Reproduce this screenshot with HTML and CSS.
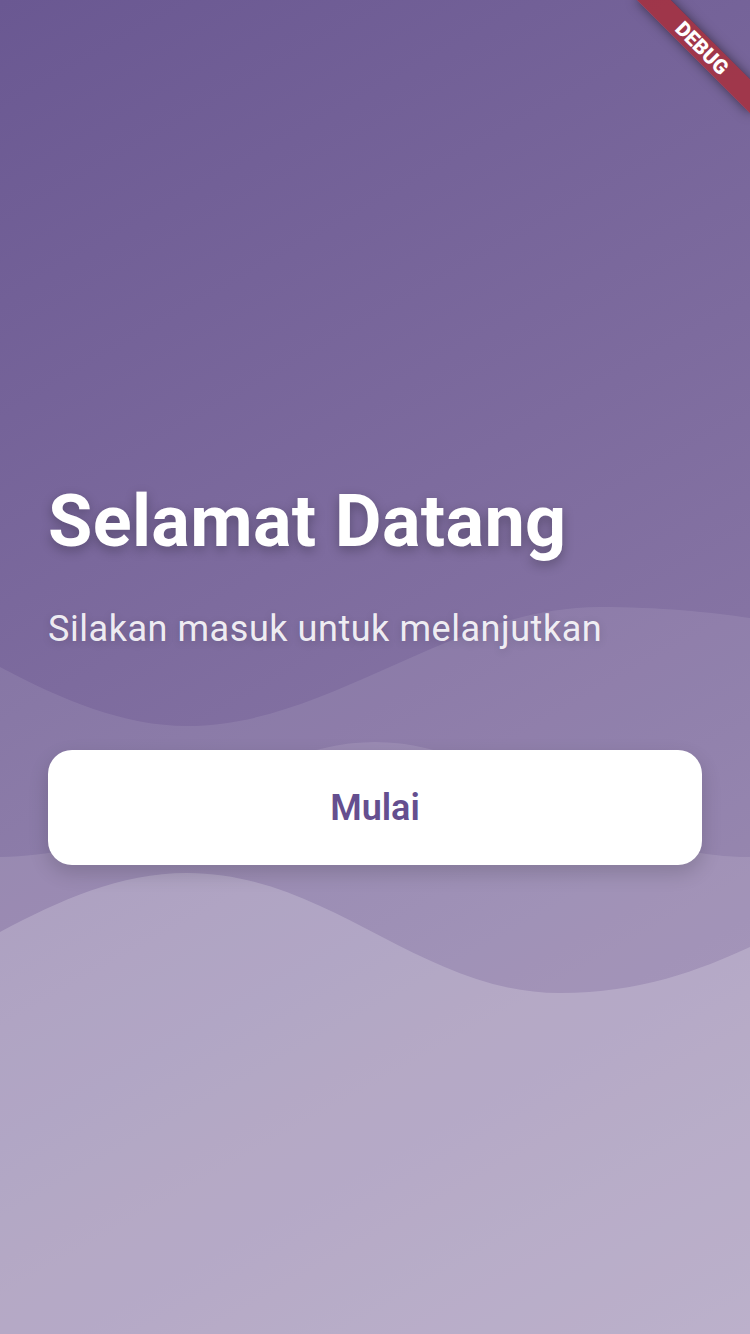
FILE: index.html
```html
<!DOCTYPE html>
<html lang="id">
<head>
<meta charset="utf-8">
<title>Selamat Datang</title>
<link rel="stylesheet" href="styles.css">
</head>
<body>
<div class="screen">
  <svg class="waves" viewBox="0 0 750 1334" preserveAspectRatio="none" aria-hidden="true">
    <path class="wave wave-1" d="M0,667 C62,700 125,726 187,726 C330,726 450,607 600,607 C660,607 710,612 750,618 L750,1334 L0,1334 Z"/>
    <path class="wave wave-2" d="M0,857 C150,857 250,742 375,742 C500,742 600,857 750,857 L750,1334 L0,1334 Z"/>
    <path class="wave wave-3" d="M0,932 C60,900 120,873 187,873 C330,873 420,993 560,993 C640,993 700,970 750,947 L750,1334 L0,1334 Z"/>
  </svg>
  <main class="content">
    <h1 class="title">Selamat Datang</h1>
    <p class="subtitle">Silakan masuk untuk melanjutkan</p>
    <button class="start-btn" type="button">Mulai</button>
  </main>
  <div class="debug-banner"><span>DEBUG</span></div>
</div>
</body>
</html>
```
FILE: styles.css
```css
* { box-sizing: border-box; }
html, body {
  margin: 0;
  padding: 0;
  width: 750px;
  height: 1334px;
  overflow: hidden;
}
body {
  font-family: Roboto, "Noto Sans", "Liberation Sans", sans-serif;
}
.screen {
  position: relative;
  width: 750px;
  height: 1334px;
  overflow: hidden;
  background: linear-gradient(150.7deg, #6a5892 0%, #9886af 100%);
}
.waves {
  position: absolute;
  inset: 0;
  width: 750px;
  height: 1334px;
}
.wave { fill: #ffffff; }
.wave-1 { fill-opacity: 0.09; }
.wave-2 { fill-opacity: 0.115; }
.wave-3 { fill-opacity: 0.205; }

.content {
  position: relative;
  display: flex;
  flex-direction: column;
  padding: 480px 48px 0;
}
.title {
  margin: 0;
  font-size: 72px;
  font-weight: 700;
  line-height: 84px;
  letter-spacing: 0.35px;
  color: #ffffff;
  text-shadow: 0 4px 12px rgba(0, 0, 0, 0.28);
}
.subtitle {
  margin: 44px 0 0;
  font-size: 36px;
  font-weight: 400;
  line-height: 42px;
  letter-spacing: 0.55px;
  color: rgba(255, 255, 255, 0.9);
  text-shadow: 0 2px 8px rgba(0, 0, 0, 0.15);
}
.start-btn {
  margin-top: 100px;
  height: 115px;
  width: 100%;
  border: none;
  border-radius: 24px;
  background: #ffffff;
  color: #654f8f;
  font-family: Roboto, "Noto Sans", "Liberation Sans", sans-serif;
  font-size: 36px;
  font-weight: 600;
  box-shadow: 0 8px 20px rgba(0, 0, 0, 0.16);
}
.debug-banner {
  position: absolute;
  left: 670px;
  top: 56px;
  width: 160px;
  height: 24px;
  transform-origin: 80px -56px;
  transform: rotate(45deg);
  background: rgba(183, 28, 28, 0.63);
  box-shadow: 0 0 12px rgba(0, 0, 0, 0.5);
  display: flex;
  align-items: center;
  justify-content: center;
}
.debug-banner span {
  color: #ffffff;
  font-size: 20.4px;
  font-weight: 900;
  line-height: 1;
}
```
